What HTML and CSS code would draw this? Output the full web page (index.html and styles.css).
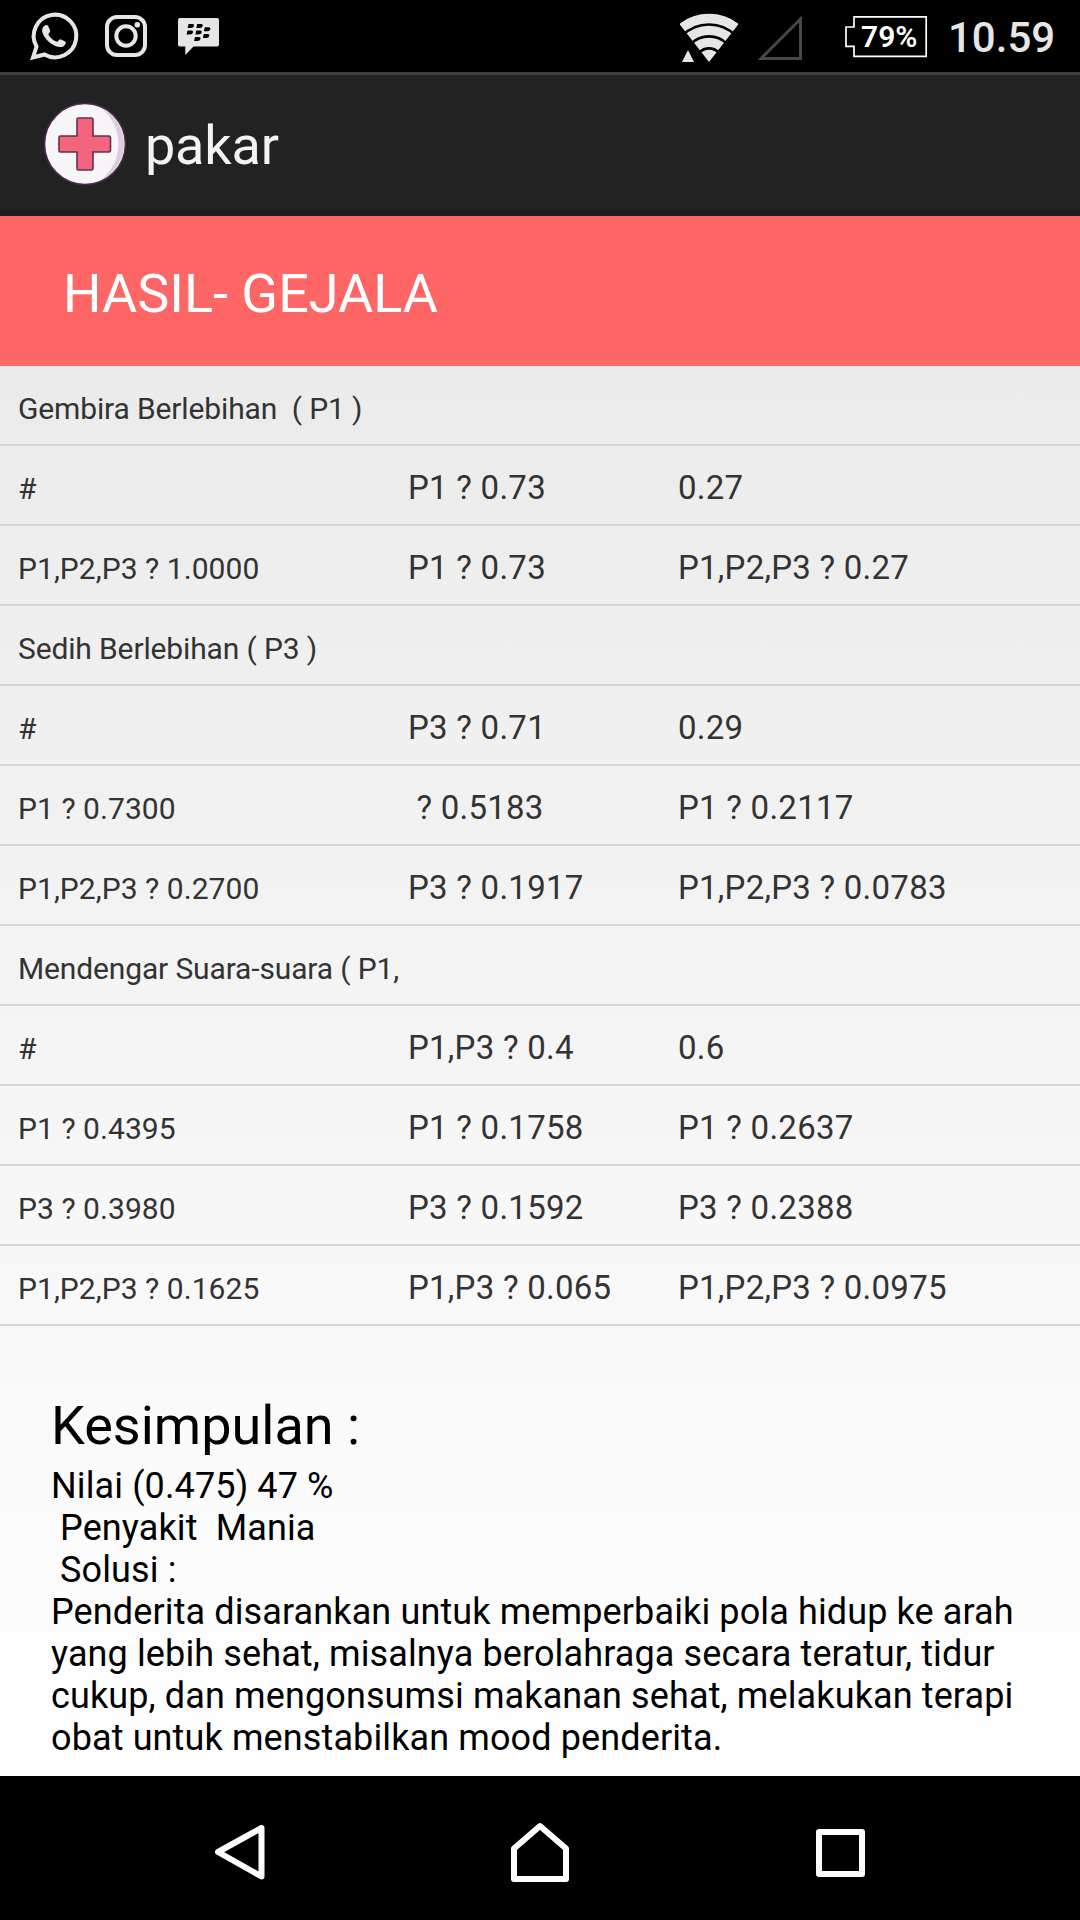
FILE: index.html
```html
<!DOCTYPE html>
<html lang="id">
<head>
  <meta charset="UTF-8" />
  <meta name="viewport" content="width=device-width, initial-scale=1.0"/>
  <title>pakar</title>
  <link rel="stylesheet" href="styles.css">
</head>
<body>

<div class="screen">
  <!-- Status bar -->
  <div class="status-bar">
    <svg class="status-left" width="240" height="72" viewBox="0 0 240 72">
      <g fill="none" stroke="#e6e6e6" stroke-width="4">
        <path d="M33 57.5 L36.5 46.5 A21.3 21.3 0 1 1 44.5 54.5 Z"/>
        <rect x="107" y="17" width="38" height="38" rx="10"/>
        <circle cx="126" cy="36" r="9.7"/>
      </g>
      <path fill="#e6e6e6" d="M45 25.5 C46.5 24.8 47.6 25 48.2 26.2 L50.2 30.5 C50.7 32 48.2 33.6 48.4 34.4 C50 37.6 53 40.4 56.6 41.8 C57.8 42 59.2 38.8 60.6 39.2 L65.2 41.6 C66.6 42.6 65.2 45.4 63.4 46.4 C60 48 55.4 46.6 51.4 43.8 C47 40.6 43 35.6 42.2 31.4 C41.8 28.8 43 26.6 45 25.5 Z"/>
      <circle fill="#e6e6e6" cx="137.3" cy="24.7" r="2.8"/>
      <path fill="#e6e6e6" d="M180 18 H217 Q219 18 219 20 V44.5 Q219 46.5 217 46.5 H193.5 L185.3 55 V46.5 H180 Q178 46.5 178 44.5 V20 Q178 18 180 18 Z"/>
      <g fill="#000">
        <path id="seed" d="M188.5 24 H192.5 Q194.5 24.2 194 26 Q193.5 28 191 28 H187.6 Z"/>
        <use href="#seed" x="8.7"/>
        <use href="#seed" x="-1" y="6.5"/>
        <use href="#seed" x="7.7" y="6.5"/>
        <use href="#seed" x="16.3" y="3.2"/>
        <use href="#seed" x="15.3" y="9.9"/>
        <use href="#seed" x="6.5" y="13"/>
      </g>
    </svg>
    <div class="status-right">
      <svg width="58" height="50" viewBox="680 14 58 50">
        <clipPath id="fan"><path d="M709 63 L674 18 V0 H744 V18 Z"/></clipPath>
        <g clip-path="url(#fan)" fill="none" stroke="#e6e6e6">
          <circle cx="709" cy="63" r="43.5" stroke-width="9.4"/>
          <circle cx="709" cy="63" r="31.6" stroke-width="9.4"/>
          <circle cx="709" cy="63" r="19.6" stroke-width="9.4"/>
          <circle cx="709" cy="63" r="6.1" stroke-width="12.2"/>
        </g>
        <path fill="#e6e6e6" d="M688 51 L694 63 H682 Z"/>
      </svg>
      <svg class="signal" width="45" height="46" viewBox="758 15 45 46">
        <path fill="none" stroke="#484848" stroke-width="3" d="M761 58.5 L800.5 19 V58.5 Z"/>
      </svg>
      <svg class="battery" width="84" height="44" viewBox="844 14 84 44">
        <path fill="none" stroke="#fff" stroke-width="1.7" d="M854 16.9 H926.2 V56.3 H854 V46.3 H846 V27 H854 Z"/>
        <text class="battery-text" x="861" y="47">79%</text>
      </svg>
      <span class="clock">10.59</span>
    </div>
  </div>

  <!-- Action bar -->
  <div class="action-bar">
    <svg width="84" height="84" viewBox="43 102 84 84">
      <circle cx="85" cy="144" r="40.5" fill="#f7f5f8" stroke="#4b2a49" stroke-width="1.6"/>
      <path fill="#dccfdd" d="M101 108 A39.5 39.5 0 0 1 101 180 A46 46 0 0 0 101 108 Z"/>
      <path fill="#f4647c" stroke="#63314f" stroke-width="1.6" stroke-linejoin="round" d="M78.5 118 H91.5 Q93 118 93 119.5 V136 H109 Q110.5 136 110.5 137.5 V150.5 Q110.5 152 109 152 H93 V168.5 Q93 170 91.5 170 H78.5 Q77 170 77 168.5 V152 H60.5 Q59 152 59 150.5 V137.5 Q59 136 60.5 136 H77 V119.5 Q77 118 78.5 118 Z"/>
    </svg>
    <h1 class="app-title">pakar</h1>
  </div>

  <div class="page-title">HASIL- GEJALA</div>

  <div class="content">
    <div class="table">
      <div class="row label"><span>Gembira Berlebihan  ( P1 )</span></div>
      <div class="row"><span>#</span><span>P1 ? 0.73</span><span>0.27</span></div>
      <div class="row"><span>P1,P2,P3 ? 1.0000</span><span>P1 ? 0.73</span><span>P1,P2,P3 ? 0.27</span></div>
      <div class="row label"><span>Sedih Berlebihan ( P3 )</span></div>
      <div class="row"><span>#</span><span>P3 ? 0.71</span><span>0.29</span></div>
      <div class="row"><span>P1 ? 0.7300</span><span> ? 0.5183</span><span>P1 ? 0.2117</span></div>
      <div class="row"><span>P1,P2,P3 ? 0.2700</span><span>P3 ? 0.1917</span><span>P1,P2,P3 ? 0.0783</span></div>
      <div class="row label"><span>Mendengar Suara-suara ( P1,</span></div>
      <div class="row"><span>#</span><span>P1,P3 ? 0.4</span><span>0.6</span></div>
      <div class="row"><span>P1 ? 0.4395</span><span>P1 ? 0.1758</span><span>P1 ? 0.2637</span></div>
      <div class="row"><span>P3 ? 0.3980</span><span>P3 ? 0.1592</span><span>P3 ? 0.2388</span></div>
      <div class="row"><span>P1,P2,P3 ? 0.1625</span><span>P1,P3 ? 0.065</span><span>P1,P2,P3 ? 0.0975</span></div>
    </div>

    <div class="summary">
      <h2>Kesimpulan :</h2>
      <p>Nilai (0.475) 47 %
 Penyakit  Mania
 Solusi :
Penderita disarankan untuk memperbaiki pola hidup ke arah
yang lebih sehat, misalnya berolahraga secara teratur, tidur
cukup, dan mengonsumsi makanan sehat, melakukan terapi
obat untuk menstabilkan mood penderita.</p>
    </div>
  </div>

  <!-- Navigation bar -->
  <div class="nav-bar">
    <svg width="52" height="60" viewBox="0 0 52 60"><path d="M47.5 5 V53.5 L4 29 Z"/></svg>
    <svg width="60" height="62" viewBox="0 0 60 62"><path d="M4 57 V26.5 L30 4 L56 26.5 V57 Z"/></svg>
    <svg width="52" height="52" viewBox="0 0 52 52"><path d="M5 5 H48 V47 H5 Z"/></svg>
  </div>
</div>

</body>
</html>
```
FILE: styles.css
```css
* {
  box-sizing: border-box;
}

body {
  margin: 0;
  font-family: Roboto, "Noto Sans", sans-serif;
  background: #000;
}

.screen {
  width: 1080px;
  height: 1920px;
  display: flex;
  flex-direction: column;
  overflow: hidden;
}

.status-bar {
  height: 72px;
  background: #000;
  display: flex;
  justify-content: space-between;
  align-items: center;
}

.status-right {
  display: flex;
  align-items: center;
  height: 72px;
  padding-right: 26px;
  padding-top: 4px;
}

.signal {
  margin-left: 20px;
}

.battery {
  margin-left: 41px;
  margin-bottom: 4px;
}

.battery-text {
  fill: #fff;
  font-size: 30px;
  font-weight: 600;
}

.clock {
  width: 106px;
  margin-left: 20px;
  color: #e6e6e6;
  font-size: 42px;
  font-weight: 500;
  line-height: 50px;
  white-space: nowrap;
}

.action-bar {
  height: 144px;
  padding: 2px 43px 0;
  background: #222;
  border-top: 3px solid #404040;
  border-bottom: 6px solid #1e1e1b;
  display: flex;
  align-items: center;
}

.app-title {
  margin: 0 0 0 18px;
  padding-top: 4px;
  color: #f3f3f3;
  font-size: 54px;
  font-weight: 400;
  letter-spacing: -0.2px;
}

.page-title {
  height: 150px;
  padding-left: 63px;
  background: #ff6666;
  color: #fff;
  font-size: 54px;
  line-height: 155px;
}

.content {
  height: 1410px;
  background: linear-gradient(#ebebeb, #fff);
}

.row {
  height: 80px;
  padding-left: 18px;
  border-bottom: 2px solid #d6d6d6;
  display: grid;
  grid-template-columns: 390px 270px 1fr;
  color: #333;
  font-size: 33px;
  line-height: 84px;
  letter-spacing: 0.25px;
  white-space: pre;
}

.row span:first-child {
  font-size: 30px;
  line-height: 86px;
  letter-spacing: 0.05px;
}

.row.label span {
  letter-spacing: -0.14px;
}

/* Kesimpulan */
.summary {
  padding: 64px 51px 0;
  color: #000;
}

.summary h2 {
  margin: 0 0 3px;
  font-size: 54px;
  font-weight: 400;
  line-height: 72px;
}

.summary p {
  margin: 0;
  font-size: 36px;
  line-height: 42px;
  letter-spacing: 0.12px;
  white-space: pre;
}

.nav-bar {
  height: 144px;
  padding: 10px 214px 0;
  background: #000;
  display: flex;
  justify-content: space-between;
  align-items: center;
}

.nav-bar path {
  fill: none;
  stroke: #fff;
  stroke-width: 6;
  stroke-linejoin: round;
}
```
